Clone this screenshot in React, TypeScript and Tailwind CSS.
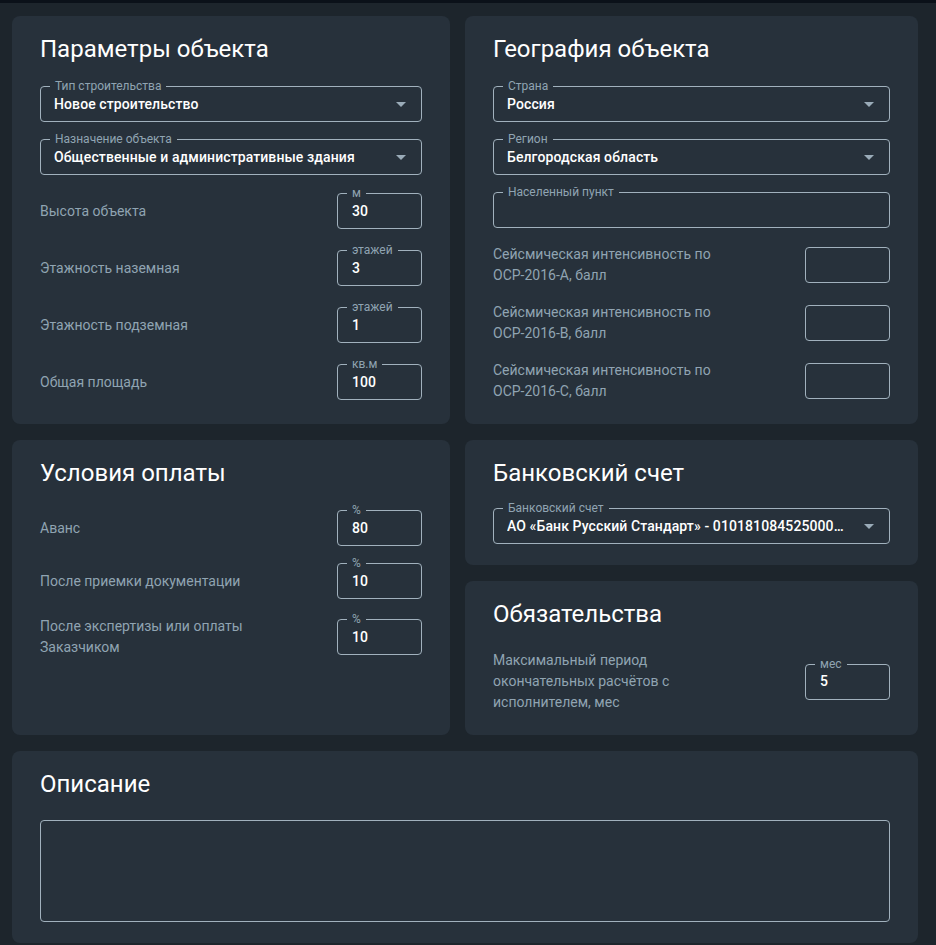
import React from 'react';

const Arrow = () => (
  <svg viewBox="0 0 24 24" className="h-6 w-6 shrink-0 fill-[#9aabb8]">
    <path d="M7 10l5 5 5-5z" />
  </svg>
);

const Legend = ({ text }: { text: string }) => (
  <span className="absolute left-[9px] top-[-9px] bg-[#27313b] px-[5px] text-[12px] leading-[16px] text-[#90a4b2]">
    {text}
  </span>
);

const Select = ({ label, value }: { label: string; value: string }) => (
  <div className="relative flex h-[36px] items-center rounded border border-[#a1b1bd] pl-[13px] pr-[8px]">
    <Legend text={label} />
    <span className="min-w-0 flex-1 truncate pr-[6px] text-[14px] font-medium tracking-[0.1px] text-white">{value}</span>
    <Arrow />
  </div>
);

const TextBox = ({ label, value, className }: { label?: string; value?: string; className?: string }) => (
  <div className={`relative flex items-center rounded border border-[#a1b1bd] pl-[14px] ${className ?? 'h-[36px]'}`}>
    {label && <Legend text={label} />}
    {value && <span className="text-[14px] font-medium tracking-[0.1px] text-white">{value}</span>}
  </div>
);

const Row = ({ label, unit, value }: { label: string; unit?: string; value?: string }) => (
  <div className="flex items-center justify-between">
    <span className="max-w-[235px] text-[14px] leading-[21px] text-[#90a4b2]">{label}</span>
    <TextBox label={unit} value={value} className="h-[36px] w-[85px]" />
  </div>
);

const Card = ({ title, children, className }: { title: string; children: React.ReactNode; className?: string }) => (
  <div className={`rounded-lg bg-[#27313b] px-[28px] pt-[17px] ${className ?? 'pb-[21px]'}`}>
    <h2 className="text-[24px] leading-[32px] text-white">{title}</h2>
    {children}
  </div>
);

export default function App() {
  return (
    <div className="min-h-screen border-t-[3px] border-[#0b1119] bg-[#1d252c] px-[12px] pb-[3px] pt-[13px] font-['Roboto',sans-serif]">
      <div className="grid grid-cols-[438px_453px] gap-x-[15px] gap-y-[16px]">
        <Card title="Параметры объекта" className="pb-[22px]">
          <div className="mt-[21px] flex flex-col gap-[17px]">
            <Select label="Тип строительства" value="Новое строительство" />
            <Select label="Назначение объекта" value="Общественные и административные здания" />
          </div>
          <div className="mt-[18px] flex flex-col gap-[21px]">
            <Row label="Высота объекта" unit="м" value="30" />
            <Row label="Этажность наземная" unit="этажей" value="3" />
            <Row label="Этажность подземная" unit="этажей" value="1" />
            <Row label="Общая площадь" unit="кв.м" value="100" />
          </div>
        </Card>

        <Card title="География объекта" className="pb-[22px]">
          <div className="mt-[21px] flex flex-col gap-[17px]">
            <Select label="Страна" value="Россия" />
            <Select label="Регион" value="Белгородская область" />
            <TextBox label="Населенный пункт" />
          </div>
          <div className="mt-[16px] flex flex-col gap-[16px]">
            <Row label="Сейсмическая интенсивность по ОСР-2016-А, балл" />
            <Row label="Сейсмическая интенсивность по ОСР-2016-В, балл" />
            <Row label="Сейсмическая интенсивность по ОСР-2016-С, балл" />
          </div>
        </Card>

        <Card title="Условия оплаты">
          <div className="mt-[21px] flex flex-col gap-[17px]">
            <Row label="Аванс" unit="%" value="80" />
            <Row label="После приемки документации" unit="%" value="10" />
            <Row label="После экспертизы или оплаты Заказчиком" unit="%" value="10" />
          </div>
        </Card>

        <div className="flex flex-col gap-[16px]">
          <Card title="Банковский счет">
            <div className="mt-[19px]">
              <Select label="Банковский счет" value="АО «Банк Русский Стандарт» - 01018108452500000012345" />
            </div>
          </Card>
          <Card title="Обязательства" className="flex-1 pb-[22px]">
            <div className="mt-[20px] flex flex-col">
              <Row label="Максимальный период окончательных расчётов с исполнителем, мес" unit="мес" value="5" />
            </div>
          </Card>
        </div>

        <Card title="Описание" className="col-span-2 pb-[21px]">
          <div className="mt-[20px] h-[102px] rounded border border-[#a1b1bd]" />
        </Card>
      </div>
    </div>
  );
}
